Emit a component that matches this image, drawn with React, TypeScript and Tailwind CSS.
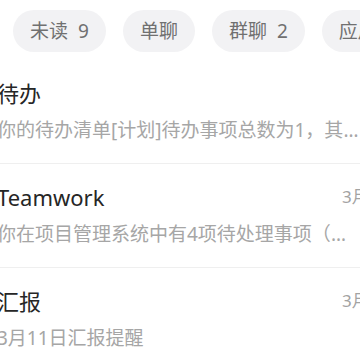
import React from 'react';

const filters = [
  { label: '未读', count: 9 },
  { label: '单聊' },
  { label: '群聊', count: 2 },
  { label: '应用' },
];

const messages = [
  {
    title: '待办',
    preview: '你的待办清单[计划]待办事项总数为1，其中今日到期1项，请及时处理',
    time: '',
  },
  {
    title: 'Teamwork',
    preview: '你在项目管理系统中有4项待处理事项（点击查看详情）',
    time: '3月11日',
  },
  {
    title: '汇报',
    preview: '3月11日汇报提醒',
    time: '3月11日',
  },
];

const App = () => {
  return (
    <div
      className="w-[360px] h-[360px] overflow-hidden bg-white"
      style={{ fontFamily: '"Noto Sans", "Noto Sans CJK SC", sans-serif' }}
    >
      <div className="w-[420px] -ml-[3px]">
        {/* Filter chips */}
        <div className="flex gap-[17px] pl-[16px] pt-[10px] pb-[8px]">
          {filters.map((f) => (
            <div
              key={f.label}
              className="h-[42px] px-[17px] rounded-full bg-[#f2f2f4] flex items-center gap-[10px] text-[19px] text-[#707070] shrink-0"
            >
              <span>{f.label}</span>
              {f.count !== undefined && <span>{f.count}</span>}
            </div>
          ))}
        </div>

        {/* Message list */}
        {messages.map((m) => (
          <div key={m.title} className="pt-[20px] pb-[20px] border-b border-[#efefef]">
            <div className="flex items-center justify-between w-[420px] h-[26px]">
              <span className="text-[22px] leading-[26px] text-[#262626]">{m.title}</span>
              <span className="text-[17px] leading-[26px] text-[#a3a3a3] w-[75px] whitespace-nowrap">
                {m.time}
              </span>
            </div>
            <div className="mt-[11px] w-[366px] truncate text-[19px] leading-[26px] text-[#a6a6a6]">
              {m.preview}
            </div>
          </div>
        ))}
      </div>
    </div>
  );
};

export default App;
